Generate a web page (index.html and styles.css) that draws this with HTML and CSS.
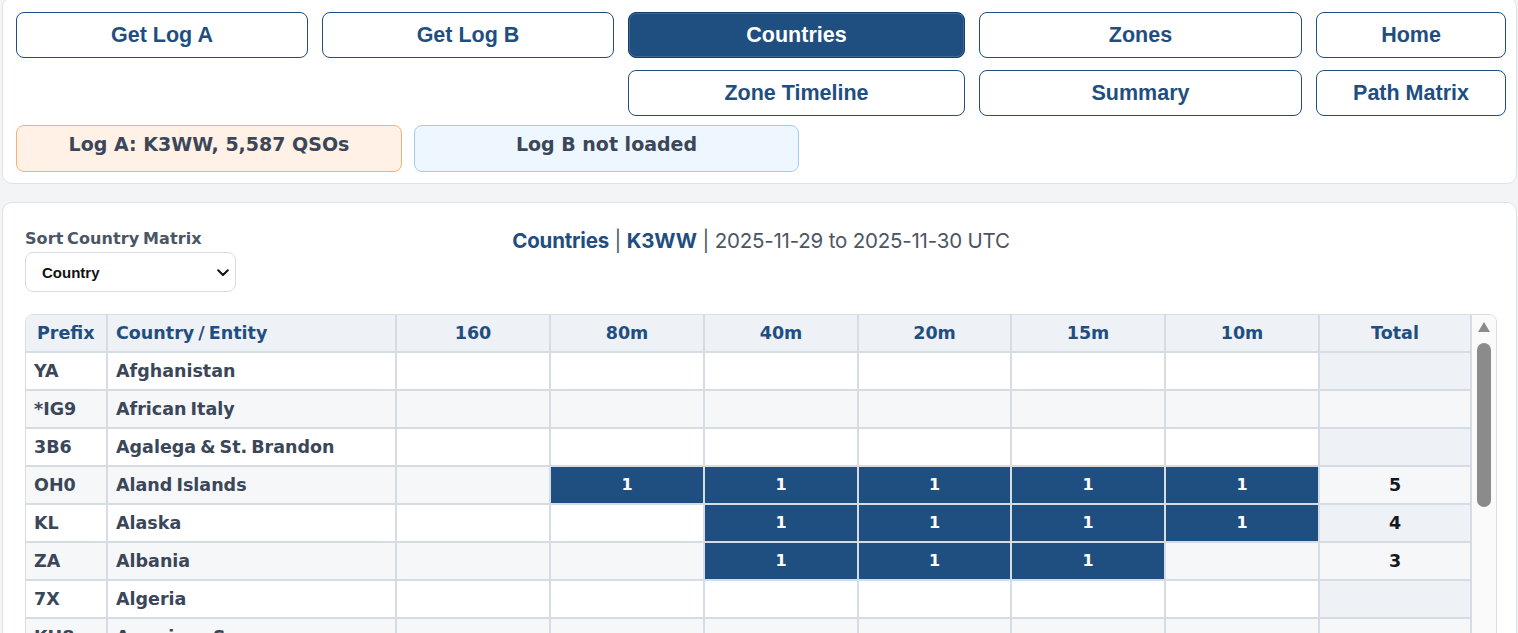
FILE: index.html
```html
<!DOCTYPE html>
<html lang="en">
<head>
<meta charset="utf-8">
<title>Countries | K3WW</title>
<link rel="stylesheet" href="styles.css">
</head>
<body>
<div class="page">
  <header class="panel top-panel">
    <nav class="nav-grid">
      <button class="nav-btn">Get Log A</button>
      <button class="nav-btn">Get Log B</button>
      <button class="nav-btn active">Countries</button>
      <button class="nav-btn">Zones</button>
      <button class="nav-btn">Home</button>
      <button class="nav-btn col3">Zone Timeline</button>
      <button class="nav-btn">Summary</button>
      <button class="nav-btn">Path Matrix</button>
    </nav>
    <div class="status-row">
      <div class="status status-a">Log A: K3WW, 5,587 QSOs</div>
      <div class="status status-b">Log B not loaded</div>
    </div>
  </header>

  <main class="panel main-panel">
    <div class="main-head">
      <div class="sort-box">
        <label class="sort-label" for="sort">Sort Country Matrix</label>
        <div class="select-wrap">
          <select id="sort" class="sort-select">
            <option>Country</option>
            <option>Prefix</option>
            <option>Total</option>
          </select>
          <svg class="chev" width="12" height="8" viewBox="0 0 12 8"><path d="M1.2 1.3 L6 6 L10.8 1.3" fill="none" stroke="#111" stroke-width="2" stroke-linecap="round" stroke-linejoin="round"/></svg>
        </div>
      </div>
      <h1 class="title"><b>Countries</b> | <b>K3WW</b> | 2025-11-29 to 2025-11-30 UTC</h1>
      <div></div>
    </div>

    <div class="matrix">
      <div class="table-area">
        <table class="grid">
          <colgroup>
            <col class="c-prefix"><col class="c-country">
            <col class="c-band"><col class="c-band"><col class="c-band"><col class="c-band-n"><col class="c-band"><col class="c-band"><col class="c-total">
          </colgroup>
          <thead>
            <tr><th class="l">Prefix</th><th class="l">Country / Entity</th><th>160</th><th>80m</th><th>40m</th><th>20m</th><th>15m</th><th>10m</th><th>Total</th></tr>
          </thead>
          <tbody>
            <tr><td>YA</td><td>Afghanistan</td><td></td><td></td><td></td><td></td><td></td><td></td><td class="tot"></td></tr>
            <tr><td>*IG9</td><td>African Italy</td><td></td><td></td><td></td><td></td><td></td><td></td><td class="tot"></td></tr>
            <tr><td>3B6</td><td>Agalega &amp; St. Brandon</td><td></td><td></td><td></td><td></td><td></td><td></td><td class="tot"></td></tr>
            <tr><td>OH0</td><td>Aland Islands</td><td></td><td class="on">1</td><td class="on">1</td><td class="on">1</td><td class="on">1</td><td class="on">1</td><td class="tot">5</td></tr>
            <tr><td>KL</td><td>Alaska</td><td></td><td></td><td class="on">1</td><td class="on">1</td><td class="on">1</td><td class="on">1</td><td class="tot">4</td></tr>
            <tr><td>ZA</td><td>Albania</td><td></td><td></td><td class="on">1</td><td class="on">1</td><td class="on">1</td><td></td><td class="tot">3</td></tr>
            <tr><td>7X</td><td>Algeria</td><td></td><td></td><td></td><td></td><td></td><td></td><td class="tot"></td></tr>
            <tr><td>KH8</td><td>American Samoa</td><td></td><td></td><td></td><td></td><td></td><td></td><td class="tot"></td></tr>
            <tr><td>FT5Z</td><td>Amsterdam &amp; St. Paul Is.</td><td></td><td></td><td></td><td></td><td></td><td></td><td class="tot"></td></tr>
            <tr><td>C3</td><td>Andorra</td><td></td><td class="on">1</td><td class="on">1</td><td class="on">1</td><td class="on">1</td><td></td><td class="tot">4</td></tr>
            <tr><td>D2</td><td>Angola</td><td></td><td></td><td></td><td class="on">1</td><td class="on">1</td><td class="on">1</td><td class="tot">3</td></tr>
            <tr><td>VP2E</td><td>Anguilla</td><td></td><td class="on">1</td><td class="on">1</td><td class="on">1</td><td class="on">1</td><td class="on">1</td><td class="tot">5</td></tr>
          </tbody>
        </table>
      </div>
      <div class="vbar" aria-hidden="true">
        <div class="vbar-up"></div>
        <div class="vbar-thumb"></div>
      </div>
    </div>
  </main>
</div>
</body>
</html>
```
FILE: styles.css
```css
* { box-sizing: border-box; }

html, body {
  margin: 0;
  background: #f3f4f6;
}

body {
  font-family: "DejaVu Sans", sans-serif;
  color: #3b4658;
}

.page {
  padding: 0 1px 0 2px;
}

.panel {
  background: #ffffff;
  border: 1px solid #dde2e8;
  border-radius: 10px;
}

.top-panel {
  margin-top: -3px;
  padding: 14px 13px 11px 13px;
}

.nav-grid {
  display: grid;
  grid-template-columns: 292px 292px 337px 323px 190px;
  column-gap: 14px;
  row-gap: 12px;
}

.nav-btn {
  height: 46px;
  border: 1px solid #1f4e80;
  border-radius: 8px;
  background: #ffffff;
  color: #1f4e80;
  font-family: "Liberation Sans", Arial, sans-serif;
  font-weight: 700;
  font-size: 21.5px;
  padding: 0;
  cursor: pointer;
}

.nav-btn.active {
  background: #1f4e80;
  color: #ffffff;
  border-color: #163c63;
  box-shadow: inset 0 0 0 1px #3f6894;
}

.nav-btn.col3 {
  grid-column: 3;
}

.status-row {
  display: flex;
  gap: 12px;
  margin-top: 9px;
}

.status {
  height: 47px;
  border-radius: 8px;
  text-align: center;
  font-weight: 700;
  font-size: 19px;
  line-height: 22px;
  padding-top: 7px;
  color: #3b4658;
}

.status-a {
  width: 386px;
  background: #fff1e6;
  border: 1px solid #f4b277;
}

.status-b {
  width: 385px;
  background: #eef6ff;
  border: 1px solid #a4cbef;
}

.main-panel {
  margin-top: 18px;
  padding: 26px 19px 0 22px;
  min-height: 800px;
}

.main-head {
  display: grid;
  grid-template-columns: 1fr auto 1fr;
  align-items: start;
}

.sort-box {
  display: flex;
  flex-direction: column;
}

.sort-label {
  font-weight: 700;
  font-size: 16px;
  line-height: 20px;
  color: #4b5563;
  letter-spacing: 0.1px;
  word-spacing: -2px;
}

.select-wrap {
  position: relative;
  width: 211px;
  margin-top: 3px;
}

.sort-select {
  appearance: none;
  -webkit-appearance: none;
  width: 211px;
  height: 40px;
  border: 1px solid #d9dde3;
  border-radius: 8px;
  background: #ffffff;
  padding: 0 0 0 16px;
  font-family: "Liberation Sans", Arial, sans-serif;
  font-weight: 700;
  font-size: 15px;
  color: #111111;
}

.chev {
  position: absolute;
  right: 7px;
  top: 17px;
}

.title {
  margin: 0;
  font-family: Inter, "Liberation Sans", sans-serif;
  font-weight: 400;
  font-size: 20.5px;
  line-height: 24px;
  color: #4b5563;
  letter-spacing: -0.2px;
  white-space: nowrap;
}

.title b {
  font-weight: 700;
  color: #1f4e80;
}

.matrix {
  margin-top: 22px;
  width: 1472px;
  display: flex;
  border: 1px solid #d8dde4;
  border-radius: 8px;
  background: #ffffff;
  overflow: hidden;
}

.table-area {
  width: 1446px;
  flex: none;
  max-height: 420px;
  overflow: hidden;
}

.vbar {
  width: 24px;
  flex: none;
  background: #fafafa;
  display: flex;
  flex-direction: column;
  align-items: center;
}

.vbar-up {
  margin-top: 7px;
  width: 0;
  height: 0;
  border-left: 6px solid transparent;
  border-right: 6px solid transparent;
  border-bottom: 10px solid #8b8b8b;
}

.vbar-thumb {
  margin-top: 11px;
  width: 14px;
  height: 164px;
  border-radius: 7px;
  background: #8b8b8b;
}

.grid {
  width: 1446px;
  table-layout: fixed;
  border-collapse: separate;
  border-spacing: 0;
  font-weight: 700;
  font-size: 17.5px;
  word-spacing: -2px;
}

.c-prefix { width: 82px; }
.c-country { width: 289px; }
.c-band { width: 154px; }
.c-band-n { width: 153px; }
.c-total { width: 152px; }

.grid th {
  background: #eef1f6;
  color: #1f4e80;
  font-weight: 700;
  line-height: 36px;
  padding: 0 6px;
  text-align: center;
  border-right: 2px solid #d6dce4;
  border-bottom: 2px solid #d6dce4;
}

.grid th.l {
  text-align: left;
  padding-left: 8px;
}

.grid th:first-child {
  padding-left: 11px;
}

.grid td {
  line-height: 36px;
  padding: 0 6px 0 8px;
  border-right: 2px solid #d6dce4;
  border-bottom: 2px solid #d6dce4;
  color: #3b4658;
  white-space: nowrap;
  overflow: hidden;
}

.grid td:first-child {
  padding-left: 8px;
}

.grid tbody tr:nth-child(odd) td { background: #ffffff; }
.grid tbody tr:nth-child(even) td { background: #f5f7f9; }

.grid tbody tr:nth-child(odd) td.tot { background: #eef1f5; }

.grid td.tot {
  text-align: center;
  padding: 0;
  color: #16181d;
}

.grid tbody tr td.on {
  background: #1f4e80;
  color: #ffffff;
  text-align: center;
  padding: 0;
  font-size: 16px;
}
```
